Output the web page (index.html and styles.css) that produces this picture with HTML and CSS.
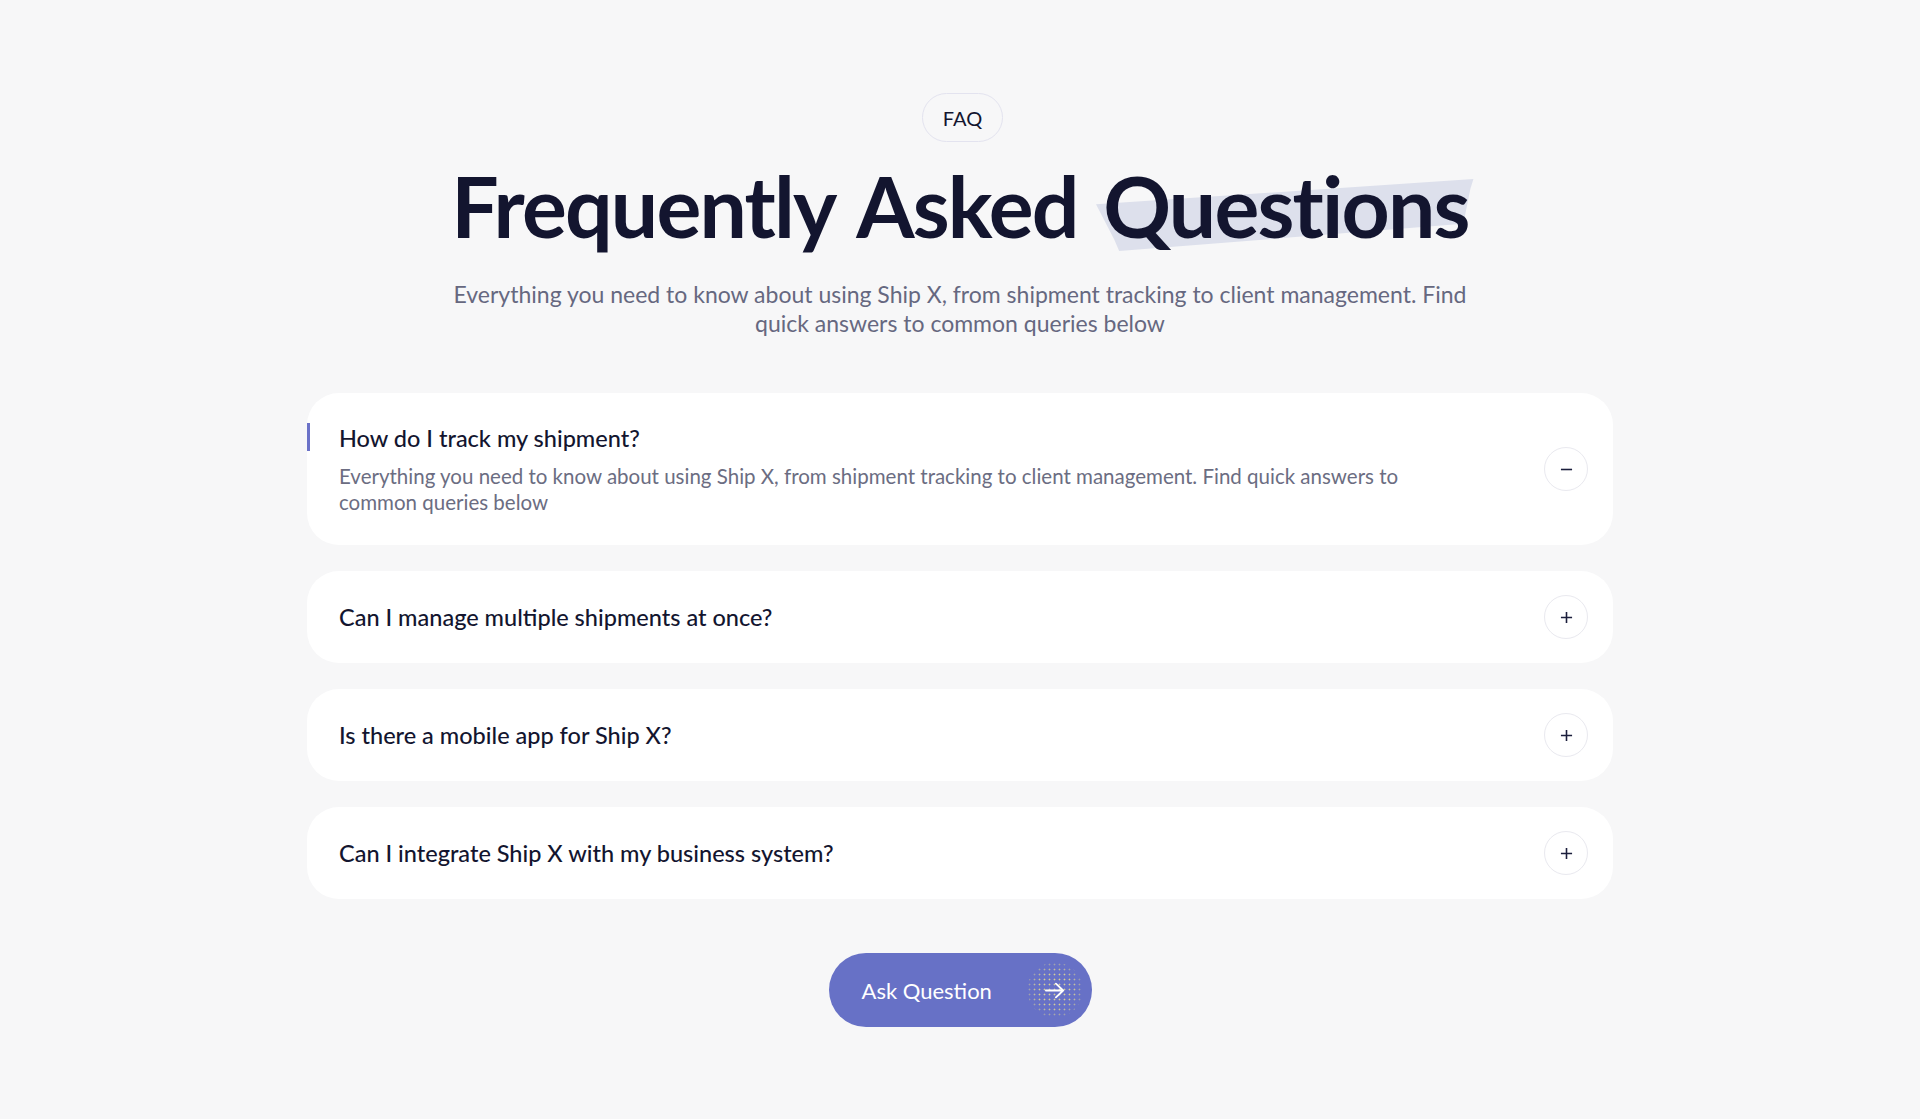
FILE: index.html
```html
<!DOCTYPE html>
<html lang="en">
<head>
  <meta charset="UTF-8">
  <meta name="viewport" content="width=device-width, initial-scale=1.0">
  <title>FAQ - Ship X</title>
  <link rel="stylesheet" href="styles.css">
</head>
<body>
  <section class="faq">
    <span class="faq-tag">FAQ</span>

    <h1 class="faq-title">
      Frequently Asked
      <span class="highlight">
        <svg class="stroke" viewBox="0 0 375 76" preserveAspectRatio="none" aria-hidden="true">
          <polygon points="0,26 375,0 372,10 365,46 23,74 18,62" fill="#dde0ec"/>
        </svg>
        <span class="word">Questions</span>
      </span>
    </h1>

    <p class="faq-sub">Everything you need to know about using Ship X, from shipment tracking to client management. Find quick answers to common queries below</p>

    <div class="faq-list">
      <div class="faq-item open">
        <div class="faq-text">
          <h3>How do I track my shipment?</h3>
          <p>Everything you need to know about using Ship X, from shipment tracking to client management. Find quick answers to common queries below</p>
        </div>
        <button class="toggle" aria-label="Collapse">
          <svg viewBox="0 0 14 14"><path d="M1 7h12"/></svg>
        </button>
      </div>

      <div class="faq-item">
        <div class="faq-text">
          <h3>Can I manage multiple shipments at once?</h3>
        </div>
        <button class="toggle" aria-label="Expand">
          <svg viewBox="0 0 14 14"><path d="M1 7h12M7 1v12"/></svg>
        </button>
      </div>

      <div class="faq-item">
        <div class="faq-text">
          <h3>Is there a mobile app for Ship X?</h3>
        </div>
        <button class="toggle" aria-label="Expand">
          <svg viewBox="0 0 14 14"><path d="M1 7h12M7 1v12"/></svg>
        </button>
      </div>

      <div class="faq-item">
        <div class="faq-text">
          <h3>Can I integrate Ship X with my business system?</h3>
        </div>
        <button class="toggle" aria-label="Expand">
          <svg viewBox="0 0 14 14"><path d="M1 7h12M7 1v12"/></svg>
        </button>
      </div>
    </div>

    <a class="ask-btn" href="#">
      <span>Ask Question</span>
      <span class="ask-icon">
        <svg viewBox="0 0 22 18"><path d="M1 9h19M12 1.5L20 9l-8 7.5"/></svg>
      </span>
    </a>
  </section>
</body>
</html>
```

FILE: styles.css
```css
body {
  margin: 0;
  background-color: #f7f7f8;
  font-family: 'Lato', 'Noto Sans', sans-serif;
  color: #13152f;
}

.faq {
  display: flex;
  flex-direction: column;
  align-items: center;
  padding: 93px 0 80px;
}

.faq-tag {
  display: inline-flex;
  align-items: center;
  height: 47px;
  margin-left: 5px;
  padding: 0 20px;
  border: 1.5px solid #e3e3ef;
  border-radius: 26px;
  font-size: 20px;
  color: #13152f;
}

.faq-title {
  margin: 12px 0 0;
  font-size: 84px;
  font-weight: 700;
  line-height: 104px;
  letter-spacing: -1.8px;
  word-spacing: 7px;
  color: #13152f;
}

.highlight {
  position: relative;
  display: inline-block;
}

.highlight .word {
  position: relative;
}

.stroke {
  position: absolute;
  left: -7px;
  top: 25px;
  width: calc(100% + 12px);
  height: 74px;
}

.faq-sub {
  width: 1030px;
  margin: 22px 0 0;
  text-align: center;
  font-size: 23px;
  line-height: 29px;
  color: #666880;
}

.faq-list {
  display: flex;
  flex-direction: column;
  gap: 26px;
  width: 1306px;
  margin-top: 55px;
}

.faq-item {
  position: relative;
  display: flex;
  align-items: center;
  min-height: 92px;
  padding: 0 25px 0 32px;
  background: #fff;
  border-radius: 32px;
  box-sizing: border-box;
}

.faq-item.open {
  padding-top: 30px;
  padding-bottom: 30px;
}

.faq-item.open::before {
  content: "";
  position: absolute;
  left: 0;
  top: 30px;
  width: 3px;
  height: 28px;
  background: #6b72c8;
}

.faq-text {
  flex: 1;
}

.faq-text h3 {
  margin: 0;
  font-size: 23.5px;
  font-weight: 500;
  line-height: 30px;
  color: #13152f;
}

.faq-text p {
  width: 1080px;
  margin: 10px 0 0;
  font-size: 20.5px;
  line-height: 26px;
  color: #6b6d82;
}

.toggle {
  display: flex;
  align-items: center;
  justify-content: center;
  width: 44px;
  height: 44px;
  padding: 0;
  border: 1.5px solid #e9e9ef;
  border-radius: 50%;
  background: #fff;
}

.toggle svg {
  width: 13px;
  height: 13px;
  fill: none;
  stroke: #1b1e3c;
  stroke-width: 1.7;
}

.ask-btn {
  display: flex;
  align-items: center;
  justify-content: space-between;
  width: 263px;
  height: 74px;
  margin-top: 54px;
  padding: 0 9px 0 33px;
  box-sizing: border-box;
  border-radius: 37px;
  background: #6771c6;
  color: #fff;
  font-size: 22px;
  text-decoration: none;
}

.ask-icon {
  position: relative;
  display: flex;
  align-items: center;
  justify-content: center;
  width: 56px;
  height: 56px;
  border-radius: 50%;
}

.ask-icon::before {
  content: "";
  position: absolute;
  inset: 0;
  border-radius: 50%;
  background-image: radial-gradient(circle, #d6cf96 0.8px, transparent 1.1px);
  background-size: 5px 5px;
  -webkit-mask-image: radial-gradient(circle, #000 45%, rgba(0,0,0,0.4) 70%, transparent 72%);
  mask-image: radial-gradient(circle, #000 45%, rgba(0,0,0,0.4) 70%, transparent 72%);
}

.ask-icon svg {
  position: relative;
  width: 20px;
  height: 17px;
  fill: none;
  stroke: #fff;
  stroke-width: 2;
  stroke-linecap: round;
  stroke-linejoin: round;
}
```
